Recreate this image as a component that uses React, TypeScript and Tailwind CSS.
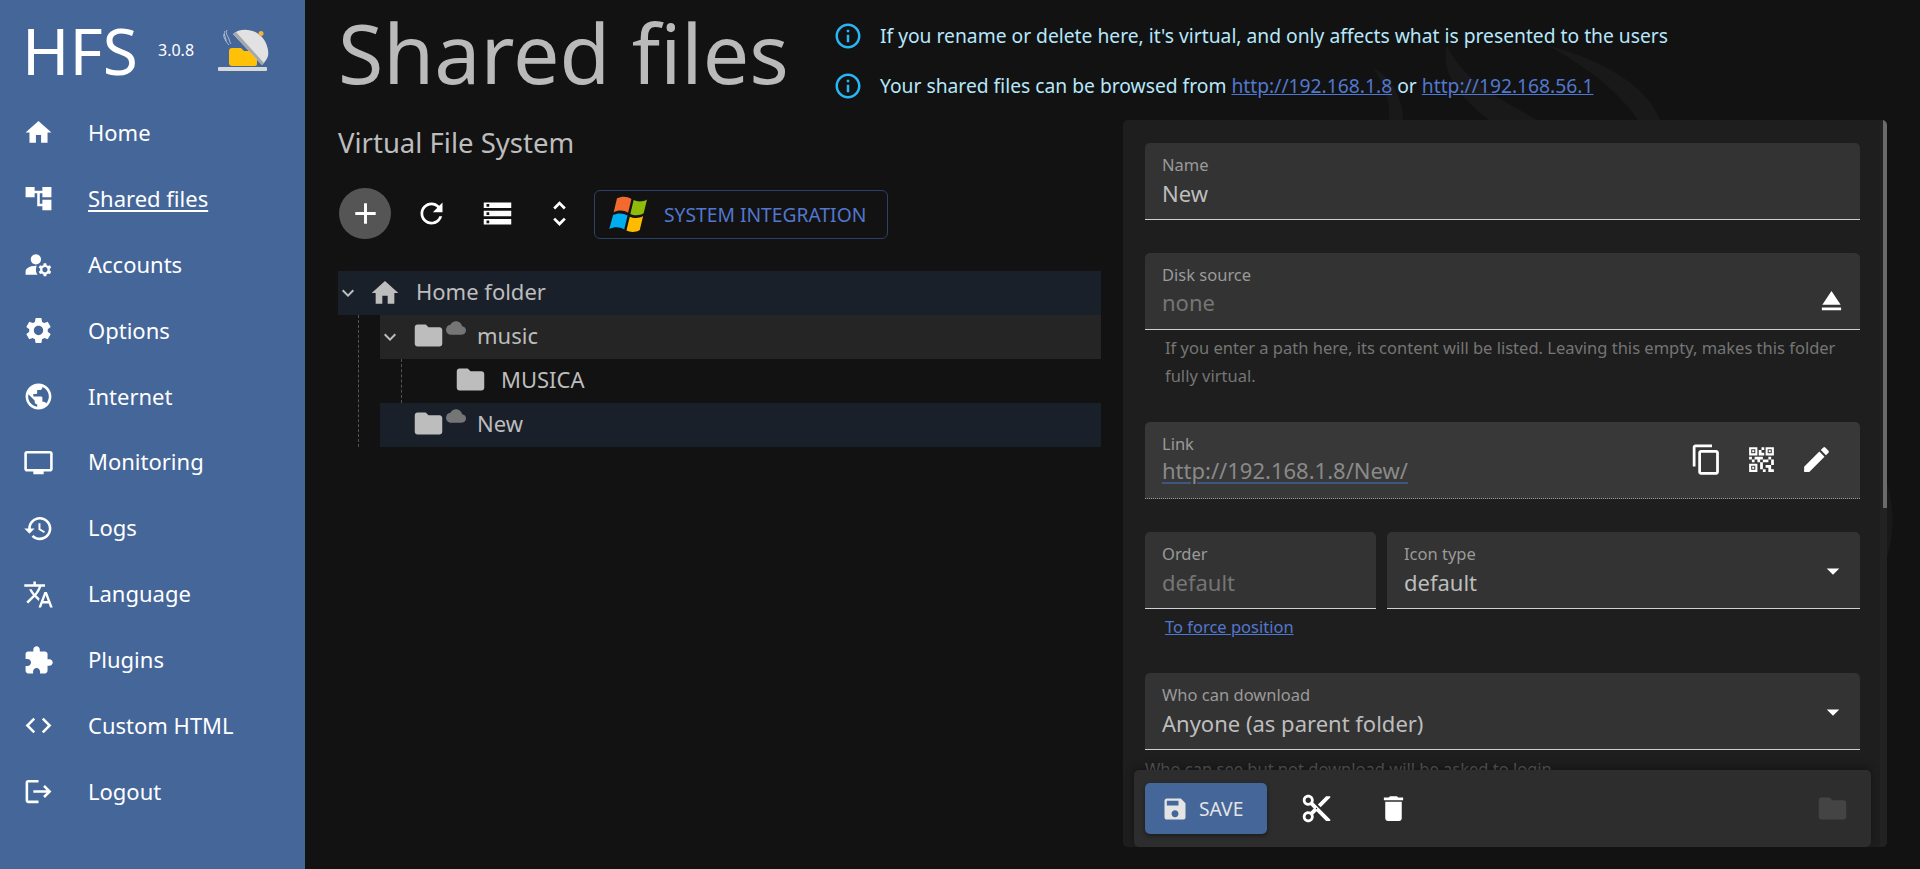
import type { ReactNode } from 'react';

const paths = {
    home: 'M10 20v-6h4v6h5v-8h3L12 3 2 12h3v8z',
    tree: 'M22 11V3h-7v3H9V3H2v8h7V8h2v10h4v3h7v-8h-7v3h-2V8h2v3z',
    accounts:
        'M10.67 13.02c-.22-.01-.44-.02-.67-.02-2.42 0-4.68.67-6.61 1.82-.88.52-1.39 1.5-1.39 2.53V20h9.26c-.79-1.13-1.26-2.51-1.26-4 0-1.07.25-2.07.67-2.98zM10 12c2.21 0 4-1.79 4-4s-1.79-4-4-4-4 1.79-4 4 1.79 4 4 4zM20.75 16c0-.22-.03-.42-.06-.63l1.14-1.01-1-1.73-1.45.49c-.32-.27-.68-.48-1.08-.63L18 11h-2l-.3 1.49c-.4.15-.76.36-1.08.63l-1.45-.49-1 1.73 1.14 1.01c-.03.21-.06.41-.06.63s.03.42.06.63l-1.14 1.01 1 1.73 1.45-.49c.32.27.68.48 1.08.63L16 21h2l.3-1.49c.4-.15.76-.36 1.08-.63l1.45.49 1-1.73-1.14-1.01c.03-.21.06-.41.06-.63zM17 18c-1.1 0-2-.9-2-2s.9-2 2-2 2 .9 2 2-.9 2-2 2z',
    settings:
        'M19.14 12.94c.04-.3.06-.61.06-.94 0-.32-.02-.64-.07-.94l2.03-1.58c.18-.14.23-.41.12-.61l-1.92-3.32c-.12-.22-.37-.29-.59-.22l-2.39.96c-.5-.38-1.03-.7-1.62-.94l-.36-2.54c-.04-.24-.24-.41-.48-.41h-3.84c-.24 0-.43.17-.47.41l-.36 2.54c-.59.24-1.13.57-1.62.94l-2.39-.96c-.22-.08-.47 0-.59.22L2.74 8.87c-.12.21-.08.47.12.61l2.03 1.58c-.05.3-.09.63-.09.94s.02.64.07.94l-2.03 1.58c-.18.14-.23.41-.12.61l1.92 3.32c.12.22.37.29.59.22l2.39-.96c.5.38 1.03.7 1.62.94l.36 2.54c.05.24.24.41.48.41h3.84c.24 0 .44-.17.47-.41l.36-2.54c.59-.24 1.13-.56 1.62-.94l2.39.96c.22.08.47 0 .59-.22l1.92-3.32c.12-.22.07-.47-.12-.61l-2.01-1.58zM12 15.6c-1.98 0-3.6-1.62-3.6-3.6s1.62-3.6 3.6-3.6 3.6 1.62 3.6 3.6-1.62 3.6-3.6 3.6z',
    globe:
        'M12 2C6.48 2 2 6.48 2 12s4.48 10 10 10 10-4.48 10-10S17.52 2 12 2zm-1 17.93c-3.95-.49-7-3.85-7-7.93 0-.62.08-1.21.21-1.79L9 15v1c0 1.1.9 2 2 2v1.93zm6.9-2.54c-.26-.81-1-1.39-1.9-1.39h-1v-3c0-.55-.45-1-1-1H8v-2h2c.55 0 1-.45 1-1V7h2c1.1 0 2-.9 2-2v-.41c2.93 1.19 5 4.06 5 7.41 0 2.08-.8 3.97-2.1 5.39z',
    tv: 'M21 3H3c-1.1 0-2 .9-2 2v12c0 1.1.9 2 2 2h5v2h8v-2h5c1.1 0 1.99-.9 1.99-2L23 5c0-1.1-.9-2-2-2zm0 14H3V5h18v12z',
    history:
        'M13 3c-4.97 0-9 4.03-9 9H1l3.89 3.89.07.14L9 12H6c0-3.87 3.13-7 7-7s7 3.13 7 7-3.13 7-7 7c-1.93 0-3.68-.79-4.94-2.06l-1.42 1.42C8.27 19.99 10.51 21 13 21c4.97 0 9-4.03 9-9s-4.03-9-9-9zm-1 5v5l4.28 2.54.72-1.21-3.5-2.08V8H12z',
    translate:
        'M12.87 15.07l-2.54-2.51.03-.03c1.74-1.94 2.98-4.17 3.71-6.53H17V4h-7V2H8v2H1v1.99h11.17C11.5 7.92 10.44 9.75 9 11.35 8.07 10.32 7.3 9.19 6.69 8h-2c.73 1.63 1.73 3.17 2.98 4.56l-5.09 5.02L4 19l5-5 3.11 3.11.76-2.04zM18.5 10h-2L12 22h2l1.12-3h4.75L21 22h2l-4.5-12zm-2.62 7l1.62-4.33L19.12 17h-3.24z',
    extension:
        'M20.5 11H19V7c0-1.1-.9-2-2-2h-4V3.5C13 2.12 11.88 1 10.5 1S8 2.12 8 3.5V5H4c-1.1 0-1.99.9-1.99 2v3.8H3.5c1.49 0 2.7 1.21 2.7 2.7s-1.21 2.7-2.7 2.7H2V20c0 1.1.9 2 2 2h3.8v-1.5c0-1.49 1.21-2.7 2.7-2.7 1.49 0 2.7 1.21 2.7 2.7V22H17c1.1 0 2-.9 2-2v-4h1.5c1.38 0 2.5-1.12 2.5-2.5S21.88 11 20.5 11z',
    code: 'M9.4 16.6L4.8 12l4.6-4.6L8 6l-6 6 6 6 1.4-1.4zm5.2 0l4.6-4.6-4.6-4.6L16 6l6 6-6 6-1.4-1.4z',
    logout: 'M17 7l-1.41 1.41L18.17 11H8v2h10.17l-2.58 2.58L17 17l5-5zM4 5h8V3H4c-1.1 0-2 .9-2 2v14c0 1.1.9 2 2 2h8v-2H4V5z',
    add: 'M19 13h-6v6h-2v-6H5v-2h6V5h2v6h6v2z',
    refresh:
        'M17.65 6.35C16.2 4.9 14.21 4 12 4c-4.42 0-7.99 3.58-7.99 8s3.57 8 7.99 8c3.73 0 6.84-2.55 7.73-6h-2.08c-.82 2.33-3.04 4-5.65 4-3.31 0-6-2.69-6-6s2.69-6 6-6c1.66 0 3.14.69 4.22 1.78L13 11h7V4l-2.35 2.35z',
    storage: 'M2 20h20v-4H2v4zm2-3h2v2H4v-2zM2 4v4h20V4H2zm4 3H4V5h2v2zm-4 7h20v-4H2v4zm2-3h2v2H4v-2z',
    unfold: 'M12 5.83L15.17 9l1.41-1.41L12 3 7.41 7.59 8.83 9 12 5.83zm0 12.34L8.83 15l-1.41 1.41L12 21l4.59-4.59L15.17 15 12 18.17z',
    expand: 'M16.59 8.59L12 13.17 7.41 8.59 6 10l6 6 6-6z',
    folder: 'M10 4H4c-1.1 0-1.99.9-1.99 2L2 18c0 1.1.9 2 2 2h16c1.1 0 2-.9 2-2V8c0-1.1-.9-2-2-2h-8l-2-2z',
    cloud: 'M19.35 10.04C18.67 6.59 15.64 4 12 4 9.11 4 6.6 5.64 5.35 8.04 2.34 8.36 0 10.91 0 14c0 3.31 2.69 6 6 6h13c2.76 0 5-2.24 5-5 0-2.64-2.05-4.78-4.65-4.96z',
    eject: 'M5 17h14v2H5zm7-12L5.33 15h13.34z',
    copy: 'M16 1H4c-1.1 0-2 .9-2 2v14h2V3h12V1zm3 4H8c-1.1 0-2 .9-2 2v14c0 1.1.9 2 2 2h11c1.1 0 2-.9 2-2V7c0-1.1-.9-2-2-2zm0 16H8V7h11v14z',
    qr: 'M15 21h-2v-2h2zM13 14h-2v5h2zM21 12h-2v4h2zM19 10h-2v2h2zM7 12H5v2h2zM5 10H3v2h2zM12 5h2V3h-2zM4.5 4.5v3h3v-3zM9 9H3V3h6zM4.5 16.5v3h3v-3zM9 21H3v-6h6zM16.5 4.5v3h3v-3zM21 9h-6V3h6zM19 19v-3h-4v2h2v3h4v-2zM17 12h-4v2h4zM13 10H7v2h2v2h2v-2h2zM14 9V7h-2V5h-2v4zM6.75 5.25h-1.5v1.5h1.5zM6.75 17.25h-1.5v1.5h1.5zM18.75 5.25h-1.5v1.5h1.5z',
    edit: 'M3 17.25V21h3.75L17.81 9.94l-3.75-3.75L3 17.25zM20.71 7.04c.39-.39.39-1.02 0-1.41l-2.34-2.34a.9959.9959 0 00-1.41 0l-1.83 1.83 3.75 3.75 1.83-1.83z',
    save: 'M17 3H5c-1.11 0-2 .9-2 2v14c0 1.1.89 2 2 2h14c1.1 0 2-.9 2-2V7l-4-4zm-5 16c-1.66 0-3-1.34-3-3s1.34-3 3-3 3 1.34 3 3-1.34 3-3 3zm3-10H5V5h10v4z',
    cut: 'M9.64 7.64c.23-.5.36-1.05.36-1.64 0-2.21-1.79-4-4-4S2 3.79 2 6s1.79 4 4 4c.59 0 1.14-.13 1.64-.36L10 12l-2.36 2.36C7.14 14.13 6.59 14 6 14c-2.21 0-4 1.79-4 4s1.79 4 4 4 4-1.79 4-4c0-.59-.13-1.14-.36-1.64L12 14l7 7h3v-1L9.64 7.64zM6 8c-1.1 0-2-.89-2-2s.9-2 2-2 2 .89 2 2-.9 2-2 2zm0 12c-1.1 0-2-.89-2-2s.9-2 2-2 2 .89 2 2-.9 2-2 2zm6-7.5c-.28 0-.5-.22-.5-.5s.22-.5.5-.5.5.22.5.5-.22.5-.5.5zM19 3l-6 6 2 2 7-7V3z',
    trash: 'M6 19c0 1.1.9 2 2 2h8c1.1 0 2-.9 2-2V7H6v12zM19 4h-3.5l-1-1h-5l-1 1H5v2h14V4z',
    dropdown: 'M7 10l5 5 5-5z',
    info: 'M11 7h2v2h-2zm0 4h2v6h-2zm1-9C6.48 2 2 6.48 2 12s4.48 10 10 10 10-4.48 10-10S17.52 2 12 2zm0 18c-4.41 0-8-3.59-8-8s3.59-8 8-8 8 3.59 8 8-3.59 8-8 8z',
};

function Icon({ d, className }: { d: string; className: string }) {
    return (
        <svg viewBox="0 0 24 24" fill="currentColor" className={`shrink-0 ${className}`}>
            <path d={d} />
        </svg>
    );
}

function Logo() {
    return (
        <svg viewBox="0 0 70 60" className="ml-[15px] mt-[8px] h-[60px] w-[70px] shrink-0">
            <path d="M16 11c-2 4 1 6 1 9s2 3 3 5M18 10c-2 4 1 6 2 9s1 4 2 5M15 14c-1 3 1 5 2 7" fill="none" stroke="#c9d2de" strokeWidth="0.8" />
            <path d="M20 31c0-2 1-3 3-3h9l3 3h10c2 0 3 1 3 3v10c0 1-1 2-2 2H23c-2 0-3-1-3-3z" fill="#ffc107" />
            <path d="M24 14c6-6 20-6 28 2 6 6 8 15 7 20-1 3-3 6-6 9z" fill="#e2e2e2" />
            <path d="M24 14l29 31 2-2L27 12z" fill="#a4a8ad" />
            <circle cx="52" cy="13.500" r="2.500" fill="#efb53f" />
            <rect x="9" y="47" width="49" height="4" rx="1" fill="#d8d8d8" />
        </svg>
    );
}

function WindowsLogo() {
    return (
        <svg viewBox="0 0 36 36" className="ml-[12px] h-[40px] w-[40px] shrink-0">
            <path d="M9 3c4-2 9-2 13 .5L19 16c-4-2.500-9-2.500-13-.5z" fill="#f26a2e" />
            <path d="M24 4.500c3 1.500 8 2 12-.5l-3 12.500c-4 2.500-9 2-12 .5z" fill="#8fbc0a" />
            <path d="M5.500 18c4-2 9-2 13 .5l-3 12.500c-4-2.500-9-2.500-13.500-.5z" fill="#00aeef" />
            <path d="M20.500 19.500c3 1.500 8 2 12-.5l-3 12.500c-4 2.500-9 2-12 .5z" fill="#ffbb00" />
        </svg>
    );
}

const nav = [
    { label: 'Home', d: paths.home },
    { label: 'Shared files', d: paths.tree, active: true },
    { label: 'Accounts', d: paths.accounts },
    { label: 'Options', d: paths.settings },
    { label: 'Internet', d: paths.globe },
    { label: 'Monitoring', d: paths.tv },
    { label: 'Logs', d: paths.history },
    { label: 'Language', d: paths.translate },
    { label: 'Plugins', d: paths.extension },
    { label: 'Custom HTML', d: paths.code },
    { label: 'Logout', d: paths.logout },
];

function Sidebar() {
    return (
        <aside className="h-full w-[305px] shrink-0 bg-[#456699] text-white">
            <div className="flex h-[100px] items-start pl-[22px] pt-[12px]">
                <span className="w-[119px] text-[64px] leading-[78px]">HFS</span>
                <span className="ml-[17px] mt-[26px] text-[16px] leading-[24px]">3.0.8</span>
                <Logo />
            </div>
            <nav>
                {nav.map((item) => (
                    <div key={item.label} className="flex h-[65.9px] items-center pl-[23px]">
                        <Icon d={item.d} className="size-[31px]" />
                        <span className={`ml-[34px] mb-[1px] text-[22px] ${item.active ? 'underline underline-offset-[3px]' : ''}`}>
                            {item.label}
                        </span>
                    </div>
                ))}
            </nav>
        </aside>
    );
}

function Alert({ children }: { children: ReactNode }) {
    return (
        <div className="flex h-[50px] items-center text-[19.25px] text-[#b8e7fb]">
            <Icon d={paths.info} className="size-[30px] text-[#29b6f6]" />
            <span className="ml-[17px]">{children}</span>
        </div>
    );
}

function FolderIcon({ cloud }: { cloud?: boolean }) {
    return (
        <span className="relative mb-[3px] flex size-[33px] shrink-0 items-center">
            <Icon d={paths.folder} className="size-[33px] text-[#bdbdbd]" />
            {cloud && <Icon d={paths.cloud} className="absolute left-[34px] top-[-1px] size-[20px] text-[#757575]" />}
        </span>
    );
}

function Tree() {
    return (
        <div className="mt-[32px] text-[22px] text-[#bdbdbd]">
            <div className="flex h-[44px] items-center bg-[#1a202a]">
                <Icon d={paths.expand} className="ml-[-2px] size-[24px]" />
                <Icon d={paths.home} className="ml-[9px] size-[32px]" />
                <span className="mb-[3px] ml-[15px]">Home folder</span>
            </div>
            <div className="ml-[20px] border-l border-dashed border-[#555] pl-[21px]">
                <div className="flex h-[44px] items-center bg-[#252525]">
                    <Icon d={paths.expand} className="ml-[-2px] size-[24px]" />
                    <span className="ml-[10px]"><FolderIcon cloud /></span>
                    <span className="mb-[3px] ml-[32px]">music</span>
                </div>
                <div className="ml-[21px] flex h-[44px] items-center border-l border-dashed border-[#555] pl-[52px]">
                    <FolderIcon />
                    <span className="mb-[3px] ml-[14px]">MUSICA</span>
                </div>
                <div className="flex h-[44px] items-center bg-[#1a202a] pl-[32px]">
                    <FolderIcon cloud />
                    <span className="mb-[3px] ml-[32px]">New</span>
                </div>
            </div>
        </div>
    );
}

function Field({
    label,
    value,
    muted,
    dotted,
    light,
    className,
    right,
}: {
    label: string;
    value: ReactNode;
    muted?: boolean;
    dotted?: boolean;
    light?: boolean;
    className?: string;
    right?: ReactNode;
}) {
    return (
        <div
            className={`relative flex h-[77px] flex-col rounded-t-[5px] border-b pl-[17px] pt-[11px] ${
                light ? 'bg-[#383838]' : 'bg-[#333333]'
            } ${dotted ? 'border-dotted border-[#999]' : 'border-[#d0d0d0]'} ${className ?? ''}`}
        >
            <span className="text-[16.5px] leading-[21px] text-[#9a9a9a]">{label}</span>
            <span className={`mt-[5px] text-[22px] leading-[27px] ${muted ? 'text-[#757575]' : 'text-[#bdbdbd]'}`}>{value}</span>
            {right}
        </div>
    );
}

function DropArrow() {
    return <Icon d={paths.dropdown} className="absolute right-[12px] top-[24px] size-[30px] text-white" />;
}

function Panel() {
    return (
        <section className="relative ml-[22px] h-[727px] w-[764px] overflow-hidden rounded-[5px] bg-[#1e1e1e]">
            <div className="flex flex-col pl-[22px] pr-[27px] pt-[23px]">
                <Field label="Name" value="New" />
                <Field
                    label="Disk source"
                    value={<span className="inline-block -translate-y-px">none</span>}
                    muted
                    className="mt-[33px]"
                    right={<Icon d={paths.eject} className="absolute right-[12px] top-[31px] size-[33px] text-white" />}
                />
                <p className="ml-[20px] mt-[4px] text-[16.5px] leading-[28px] text-[#757575]">
                    If you enter a path here, its content will be listed. Leaving this empty, makes this folder fully virtual.
                </p>
                <Field
                    label="Link"
                    dotted
                    light
                    className="mt-[32px]"
                    value={
                        <span className="inline-block -translate-y-[2px] text-[#8a8a8a] underline decoration-[#3f5683] underline-offset-[3px]">
                            http://192.168.1.8/New/
                        </span>
                    }
                    right={
                        <div className="absolute right-[27px] top-[21px] flex items-center gap-[22px] text-white">
                            <Icon d={paths.copy} className="size-[33px]" />
                            <Icon d={paths.qr} className="size-[33px]" />
                            <Icon d={paths.edit} className="size-[33px]" />
                        </div>
                    }
                />
                <div className="mt-[33px] flex gap-[11px]">
                    <Field label="Order" value="default" muted className="w-[231px]" />
                    <Field label="Icon type" value="default" className="flex-1" right={<DropArrow />} />
                </div>
                <a className="ml-[20px] mt-[4px] text-[16.5px] leading-[28px] text-[#5277cf] underline">To force position</a>
                <Field label="Who can download" value="Anyone (as parent folder)" className="mt-[32px]" right={<DropArrow />} />
                <p className="mt-[5px] text-[16.5px] leading-[28px] text-[#555]">Who can see but not download will be asked to login</p>
            </div>
            <div className="absolute bottom-0 left-[11px] flex h-[77px] w-[737px] items-center rounded-[5px] bg-[#2d2d2d] pl-[11px] shadow-[0_-2px_8px_rgba(0,0,0,0.35)]">
                <button className="flex h-[51px] w-[122px] items-center rounded-[5px] bg-[#456699] pl-[16px] text-[19.25px] text-[#e4e4e4] shadow-[0_2px_4px_rgba(0,0,0,0.4)]">
                    <Icon d={paths.save} className="size-[28px]" />
                    <span className="ml-[10px] pt-[2px]">SAVE</span>
                </button>
                <Icon d={paths.cut} className="ml-[33px] size-[33px] text-white" />
                <Icon d={paths.trash} className="ml-[44px] size-[33px] text-white" />
                <Icon d={paths.folder} className="ml-auto mr-[22px] size-[33px] text-[#444]" />
            </div>
            {/* scrollbar */}
            <div className="absolute bottom-0 right-0 top-0 w-[7px] bg-[#222]">
                <div className="ml-[3px] h-[388px] w-[4px] bg-[#6b6b6b]" />
            </div>
        </section>
    );
}

export default function App() {
    return (
        <div className="flex h-screen overflow-hidden bg-[#121212] font-['Noto_Sans',sans-serif]">
            <Sidebar />
            <main className="relative flex-1">
                {/* faint backdrop artwork */}
                <svg viewBox="0 0 1615 869" className="absolute inset-0 h-full w-full">
                    <path d="M1142 45c15 35 55 55 90 75h-48c-25-20-50-45-42-75zM1242 45c55 15 100 40 113 75h-22c-20-30-55-55-91-75zM1068 68c18 8 30 30 30 52h-14c2-20-6-38-16-52zM1577 470c14 30 14 70 0 100z" fill="#191919" />
                </svg>
                <div className="relative flex h-full flex-col pl-[33px]">
                    <header className="flex h-[120px] shrink-0">
                        <h1 className="w-[449px] shrink-0 whitespace-nowrap text-[82.5px] leading-[104px] text-[#bababa]">Shared files</h1>
                        <div className="ml-[46px] mt-[11px]">
                            <Alert>If you rename or delete here, it's virtual, and only affects what is presented to the users</Alert>
                            <Alert>
                                Your shared files can be browsed from{' '}
                                <a className="text-[#5277cf] underline">http://192.168.1.8</a> or{' '}
                                <a className="text-[#5277cf] underline">http://192.168.56.1</a>
                            </Alert>
                        </div>
                    </header>
                    <div className="flex">
                        <div className="w-[763px] pt-[6px]">
                            <h2 className="text-[27.5px] leading-[34px] text-[#bdbdbd]">Virtual File System</h2>
                            <div className="mt-[28px] flex items-center">
                                <span className="ml-px flex h-[51px] w-[52px] items-center justify-center rounded-full bg-[#555] text-white">
                                    <Icon d={paths.add} className="size-[35px]" />
                                </span>
                                <Icon d={paths.refresh} className="ml-[23.500px] size-[33px] text-white" />
                                <Icon d={paths.storage} className="ml-[33.500px] size-[33px] text-white" />
                                <Icon d={paths.unfold} className="ml-[28.500px] size-[33px] text-white" />
                                <span className="ml-[18.500px] mt-[2px] flex h-[49px] w-[294px] items-center rounded-[6px] border border-[#2b4166] text-[19.25px] text-[#5277cf]">
                                    <WindowsLogo />
                                    <span className="ml-[17px] pt-[2px]">SYSTEM INTEGRATION</span>
                                </span>
                            </div>
                            <Tree />
                        </div>
                        <Panel />
                    </div>
                </div>
            </main>
        </div>
    );
}
